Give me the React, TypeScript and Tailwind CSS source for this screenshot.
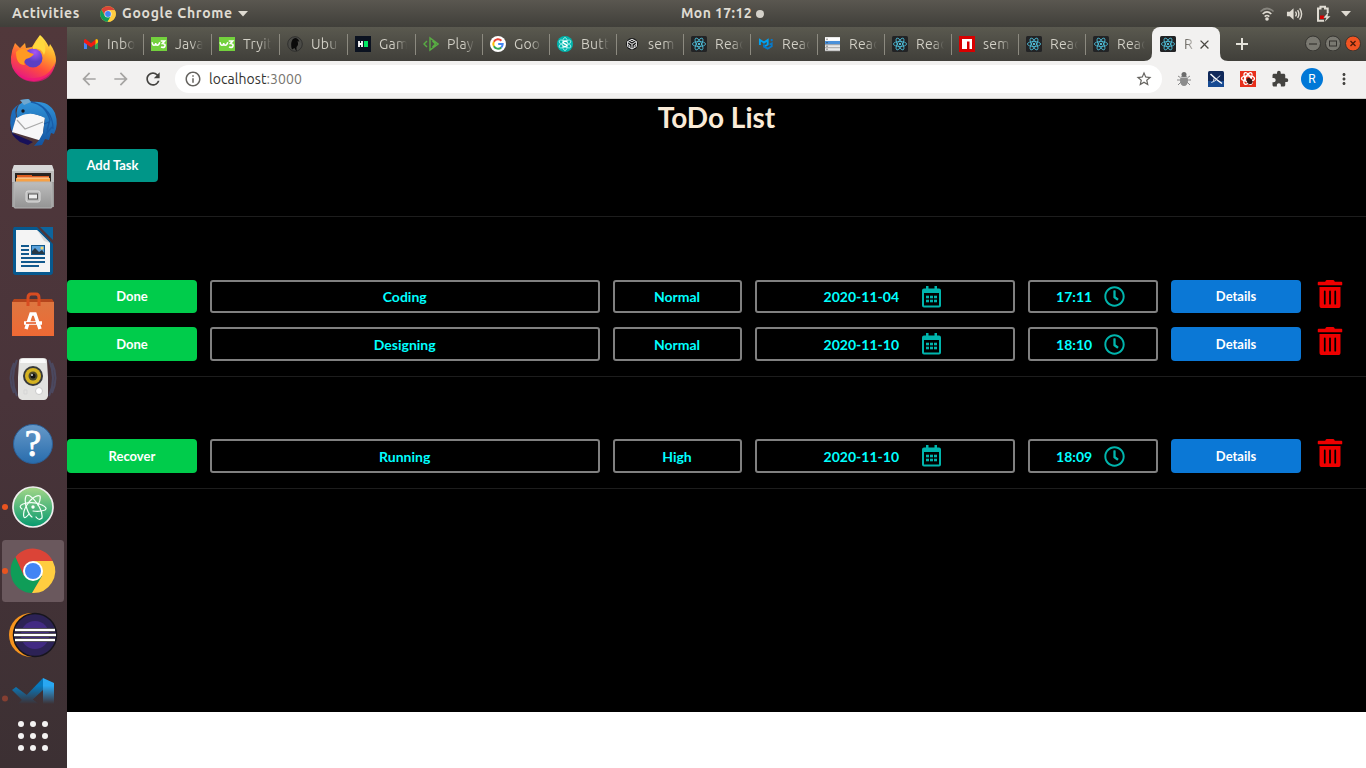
import type { ReactNode } from "react";
import { FaRegClock, FaTrashAlt } from "react-icons/fa";
import { MdArrowBack, MdArrowForward, MdRefresh, MdInfoOutline, MdStarBorder, MdExtension, MdMoreVert, MdClose } from "react-icons/md";

const uiFont = "font-['Ubuntu','Noto_Sans',sans-serif]";

function ChromeLogo({ className }: { className: string }) {
  return (
    <svg viewBox="0 0 48 48" className={className}>
      <circle cx="24" cy="24" r="23.5" fill="#fdd141" />
      <path d="M24 13 L44.6 13 A23.5 23.5 0 0 0 4.2 11.3 L14.5 29.5 Z" fill="#db4437" />
      <path d="M4.2 11.3 A23.5 23.5 0 0 0 23 47.5 L33.5 29.5 L24 24 L14.5 29.5 Z" fill="#0f9d58" />
      <path d="M33.5 29.5 L23 47.5 A23.5 23.5 0 0 0 44.6 13 L24 13 Z" fill="#ffcd40" />
      <circle cx="24" cy="24" r="10.7" fill="#f1f1f1" />
      <circle cx="24" cy="24" r="8.7" fill="#4285f4" />
    </svg>
  );
}

function ReactFavicon() {
  return (
    <svg viewBox="0 0 16 16" className="size-4">
      <rect width="16" height="16" rx="1.5" fill="#222325" />
      <g fill="none" stroke="#4fc3e0" strokeWidth="0.8">
        <ellipse cx="8" cy="8" rx="6.6" ry="2.5" />
        <ellipse cx="8" cy="8" rx="6.6" ry="2.5" transform="rotate(60 8 8)" />
        <ellipse cx="8" cy="8" rx="6.6" ry="2.5" transform="rotate(120 8 8)" />
      </g>
      <circle cx="8" cy="8" r="1.1" fill="#61dafb" />
    </svg>
  );
}

function W3Favicon() {
  return (
    <svg viewBox="0 0 16 16" className="size-4">
      <rect y="1" width="16" height="14" fill="#73d13d" />
      <path d="M1.2 6.3 Q1.4 9.3 3 9.3 Q4.700 9.300 4.700 7 Q4.900 9.300 6.300 9.300 Q8 9.200 8.800 6.300" fill="none" stroke="#fff" strokeWidth="1.500" />
      <path d="M9.700 5 H13.600 L11.500 7.500 Q14.300 7.600 14 9.700 Q13.400 12.300 10 11" fill="none" stroke="#fff" strokeWidth="1.700" />
    </svg>
  );
}

const gmail = (
  <svg viewBox="0 0 16 16" className="size-4">
    <path d="M1 4 v9 h3 V6z" fill="#4285f4" />
    <path d="M12 6 v7 h3 V4z" fill="#34a853" />
    <path d="M12 4 l1.500-1 q1.500 0 1.500 1.500 V6.500 l-3 2.300z" fill="#fbbc04" />
    <path d="M1 6.500 V4.500 Q1 3 2.500 3 l5.500 4.200 L12.500 3.500 V8 L8 11.300z" fill="#f21b12" />
  </svg>
);
const ubuntuWiki = (
  <svg viewBox="0 0 16 16" className="size-4">
    <circle cx="8" cy="8" r="7.300" fill="#4b4b47" stroke="#30302e" />
    <path d="M5 13.500 Q3 8 5.500 3.500 Q8 .5 11 3.300 L12.500 5.500 L10.500 5.300 Q12 9 9.500 11 L9.500 15.500 L7.500 12z" fill="#0a0a0a" />
  </svg>
);
const hackerRank = (
  <svg viewBox="0 0 16 16" className="size-4">
    <rect width="16" height="16" fill="#0b1220" />
    <path d="M4 5v6M7 5v6M4 8h3" stroke="#fff" strokeWidth="1.800" />
    <rect x="9" y="5" width="4" height="6" fill="#00ea64" />
  </svg>
);
const play = (
  <svg viewBox="0 0 16 16" className="size-4">
    <path d="M4 5 L1 8 L4 11 M7 2 V14 L15 8z M9.500 5 L12.500 8 L9.500 11" fill="none" stroke="#58ad43" strokeWidth="1.400" />
  </svg>
);
const google = (
  <svg viewBox="0 0 16 16" className="size-4">
    <circle cx="8" cy="8" r="8" fill="#fff" />
    <g fill="none" strokeWidth="2">
      <path d="M3.900 5.700 A4.700 4.700 0 0 1 11.400 4.700" stroke="#ea4335" />
      <path d="M3.900 5.700 A4.700 4.700 0 0 0 3.900 10.300" stroke="#fbbc05" />
      <path d="M3.900 10.300 A4.700 4.700 0 0 0 11.200 11.400" stroke="#34a853" />
      <path d="M11.200 11.400 A4.700 4.700 0 0 0 12.700 8 H8.200" stroke="#4285f4" />
    </g>
  </svg>
);
const semanticReact = (
  <svg viewBox="0 0 16 16" className="size-4">
    <circle cx="8" cy="8" r="8" fill="#00b5ad" />
    <g fill="none" stroke="#b4f3ef" strokeWidth="0.800">
      <ellipse cx="8" cy="8" rx="2.600" ry="6.500" />
      <ellipse cx="8" cy="8" rx="2.600" ry="6.500" transform="rotate(60 8 8)" />
      <ellipse cx="8" cy="8" rx="2.600" ry="6.500" transform="rotate(120 8 8)" />
      <path d="M10 5.800 Q8 4.700 6.500 5.800 Q6 7.500 8 8 Q10 8.500 9.500 10 Q8 11.200 6 10" stroke="#fff" strokeWidth="1.300" />
    </g>
  </svg>
);
const sandbox = (
  <svg viewBox="0 0 16 16" className="size-4">
    <circle cx="8" cy="8" r="6" fill="#171819" />
    <path d="M8 3.200 L12.400 5.600 V10.500 L8 13 L3.600 10.500 V5.600z M3.600 5.600 L8 8.200 L12.400 5.600 M8 8.200 V13 M5.800 4.400 L8 5.700 L10.200 4.400 M3.600 8.300 L5.800 9.600 V11.700 M12.400 8.300 L10.200 9.600 V11.700" fill="none" stroke="#e6e6e6" strokeWidth="1" />
  </svg>
);
const mui = (
  <svg viewBox="0 0 16 16" className="size-4">
    <path d="M1.900 9 V4 L6 6.500 L9.700 4 V8.500 L6 10.700" fill="none" stroke="#00a2f2" strokeWidth="1.900" />
    <path d="M6 8.500 V10.700 L9.700 12.700 L13.700 10.300 V7.500 L11.500 8.500 M13.700 3 V5.300" fill="none" stroke="#0779c9" strokeWidth="1.900" />
  </svg>
);
const list = (
  <svg viewBox="0 0 16 16" className="size-4">
    <rect y="1" width="15" height="14" fill="#e8e8e8" />
    <rect x="0" y="2" width="15" height="2.700" fill="#fff" />
    <rect x="0" y="5" width="15" height="3.300" fill="#4a90d9" />
    <path d="M0 8.700h15M0 11.700h15M0 15h15" stroke="#888" strokeWidth="0.700" />
    <path d="M2 2.700v1M2 6.200v1M2 9.700v1M2 12.700v1" stroke="#222" />
  </svg>
);
const npm = (
  <svg viewBox="0 0 16 16" className="size-4">
    <rect width="16" height="16" fill="#d80000" />
    <path d="M3 3 H13 V13 H10.500 V5.500 H8 V13 H3z" fill="#fff" />
  </svg>
);

const tabs: { icon: ReactNode; title: string }[] = [
  { icon: gmail, title: "Inbo" },
  { icon: <W3Favicon />, title: "Java" },
  { icon: <W3Favicon />, title: "Tryit" },
  { icon: ubuntuWiki, title: "Ubu" },
  { icon: hackerRank, title: "Gam" },
  { icon: play, title: "Play" },
  { icon: google, title: "Goo" },
  { icon: semanticReact, title: "Butt" },
  { icon: sandbox, title: "sem" },
  { icon: <ReactFavicon />, title: "Reac" },
  { icon: mui, title: "Reac" },
  { icon: list, title: "Reac" },
  { icon: <ReactFavicon />, title: "Reac" },
  { icon: npm, title: "sem" },
  { icon: <ReactFavicon />, title: "Reac" },
  { icon: <ReactFavicon />, title: "Reac" },
];

function TopBar() {
  return (
    <header className="grid h-[27px] shrink-0 grid-cols-[1fr_auto_1fr] items-center bg-linear-to-b from-[#5a5750] to-[#403f3a] text-[14px] font-semibold text-[#dfdbd2]">
      <div className="flex items-center pl-3">
        <span className="w-[68px] tracking-[0.55px] whitespace-nowrap">Activities</span>
        <ChromeLogo className="ml-5 size-4" />
        <span className="ml-[6px] w-[111px] tracking-[0.7px] whitespace-nowrap">Google Chrome</span>
        <svg viewBox="0 0 10 6" className="ml-[5px] h-[6px] w-[10px]"><path d="M0 0h10L5 5.500z" fill="#dfdbd2" /></svg>
      </div>
      <div className="flex items-center gap-1 pl-[79px]">
        <span className="w-[71px] tracking-[0.4px] whitespace-nowrap">Mon 17:12</span>
        <span className="size-2 rounded-full bg-[#d4d1c9]" />
      </div>
      <div className="flex items-center justify-end pr-[15px]">
        <svg viewBox="0 0 16 16" className="mr-[11px] size-4" fill="none">
          <path d="M1.500 5.500 Q8 -.5 14.500 5.500" stroke="#86847d" strokeWidth="1.700" />
          <path d="M3.700 8 Q8 3.800 12.300 8M5.700 10.700 Q8 8.300 10.300 10.700" stroke="#dfdbd2" strokeWidth="1.700" />
          <circle cx="8" cy="13" r="1.800" fill="#dfdbd2" />
        </svg>
        <svg viewBox="0 0 18 16" className="mr-[13px] h-4 w-[17px]" fill="none" stroke="#dfdbd2" strokeWidth="1.500">
          <path d="M1 5.500 H4 L8 2 V14 L4 10.500 H1z" fill="#dfdbd2" stroke="none" />
          <path d="M10 5.500 Q12 8 10 10.500M12.300 3.800 Q15 8 12.300 12.200M14.500 2 Q18.500 8 14.500 14" />
        </svg>
        <svg viewBox="0 0 15 18" className="mr-[10px] h-[18px] w-[15px]">
          <path d="M8 15.700 H2 V3.500 H4.500 V1.800 H9 V3.500 H11.700 V8" fill="none" stroke="#dfdbd2" strokeWidth="2" />
          <rect x="4" y="10.500" width="4" height="3.500" fill="#d40000" />
          <path d="M12.500 7 L7.500 12.700 H10.500 L8.500 17 L14.500 11.200 H11.500z" fill="#dfdbd2" />
        </svg>
        <svg viewBox="0 0 10 6" className="h-[6px] w-[10px]"><path d="M0 0h10L5 5.500z" fill="#dfdbd2" /></svg>
      </div>
    </header>
  );
}

function TabStrip() {
  return (
    <div className="flex h-[34px] shrink-0 bg-linear-to-b from-[#5a594f] to-[#403f3a] pl-[8px]">
      {tabs.map((t, i) => (
        <div key={i} className={`flex shrink-0 items-center ${i < 5 ? "w-[68px]" : "w-[67px]"}`}>
          <span className={i === 0 ? "h-[21px] w-px" : "h-[21px] w-px bg-[#8c8a80]"} />
          <span className="ml-[7px] shrink-0">{t.icon}</span>
          <span className="ml-2 w-[28px] overflow-hidden bg-linear-to-r from-[#d3d1c7] from-60% to-transparent bg-clip-text text-[14px] tracking-[0.2px] whitespace-nowrap text-transparent">{t.title}</span>
        </div>
      ))}
      <div className="relative flex w-[68px] shrink-0 items-center rounded-t-lg bg-[#f2f1f0] pl-2">
        <svg viewBox="0 0 8 8" className="absolute bottom-0 -left-2 size-2"><path d="M8 0V8H0Q8 8 8 0" fill="#f2f1f0" /></svg>
        <svg viewBox="0 0 8 8" className="absolute -right-2 bottom-0 size-2"><path d="M0 0V8H8Q0 8 0 0" fill="#f2f1f0" /></svg>
        <ReactFavicon />
        <span className="ml-2 w-[9px] overflow-hidden bg-linear-to-r from-[#55524c] to-[#bbb9b5] bg-clip-text text-[14px] text-transparent">R</span>
        <MdClose className="ml-[4px] size-[15px] text-[#4a4843]" />
      </div>
      <svg viewBox="0 0 12 12" className="mt-[11px] ml-4 size-3"><path d="M6 0v12M0 6h12" stroke="#e4e2da" strokeWidth="2" /></svg>
      <div className="mt-[8px] ml-auto flex gap-1 pr-[5px]">
        {[0, 1, 2].map((n) => (
          <svg key={n} viewBox="0 0 16 16" className="size-4">
            <circle cx="8" cy="8.500" r="7.500" fill={n === 2 ? "#f15422" : "#7a7971"} stroke="#34332f" />
            {n === 0 && <path d="M4 9h8" stroke="#34332f" strokeWidth="1.200" />}
            {n === 1 && <rect x="4.500" y="6" width="7" height="5" fill="none" stroke="#34332f" />}
            {n === 2 && <path d="M5.500 6l5 5M10.500 6l-5 5" stroke="#4b1b0b" strokeWidth="1.300" />}
          </svg>
        ))}
      </div>
    </div>
  );
}

function Toolbar() {
  return (
    <div className="flex h-[38px] shrink-0 items-center border-b border-[#cfcdca] bg-[#f2f1f0] pb-px pl-3">
      <MdArrowBack className="size-5 text-[#a5a4a2]" />
      <MdArrowForward className="ml-3 size-5 text-[#a5a4a2]" />
      <MdRefresh className="ml-3 size-5 text-[#444340]" />
      <div className="ml-3 flex h-7 w-[987px] items-center rounded-full bg-white px-[9px]">
        <MdInfoOutline className="size-[18px] text-[#65635f]" />
        <span className="ml-[7px] flex-1 text-[14px] tracking-[0.07px] text-[#33322f]">localhost<span className="text-[#777570]">:3000</span></span>
        <MdStarBorder className="size-[18px] text-[#65635f]" />
      </div>
      <svg viewBox="0 0 16 16" className="ml-[14px] size-4">
        <g stroke="#888" strokeWidth="1"><path d="M2 5l3 2M1 9h4M2 14l3-3M14 5l-3 2M15 9h-4M14 14l-3-3" /></g>
        <ellipse cx="8" cy="9.500" rx="4" ry="5.500" fill="#8c8c8c" /><circle cx="8" cy="3.500" r="2.500" fill="#6c6c6c" />
        <path d="M4 6.500h8" stroke="#d5d5d5" strokeWidth=".7" />
      </svg>
      <svg viewBox="0 0 16 16" className="ml-4 size-4">
        <rect width="16" height="16" rx="1.500" fill="#10295a" /><path d="M0 10h16v6H0z" fill="#174a92" />
        <path d="M2.500 3 L8.500 8.500 L14 12.500" fill="none" stroke="#fff" strokeWidth="1.500" />
        <path d="M12.300 4.500 L8 8.300 M6 7.500 L5.500 10.500 L3.300 11.500 M8 9 L5.500 10.700" fill="none" stroke="#dbe4f2" strokeWidth="1" />
      </svg>
      <svg viewBox="0 0 16 16" className="ml-4 size-4">
        <rect width="16" height="16" fill="#e8301c" />
        <g fill="none" stroke="#fff" strokeWidth="1.300"><ellipse cx="8" cy="7.500" rx="6.500" ry="2.700" /><ellipse cx="8" cy="7.500" rx="6.500" ry="2.700" transform="rotate(60 8 7.500)" /><ellipse cx="8" cy="7.500" rx="6.500" ry="2.700" transform="rotate(120 8 7.500)" /></g>
        <ellipse cx="9.500" cy="10" rx="2.500" ry="3.300" fill="#3a1512" transform="rotate(-35 9.500 10)" />
        <path d="M6 9l7 2M7 12l5-4M8 13l4-1" stroke="#3a1512" strokeWidth=".8" />
      </svg>
      <MdExtension className="ml-[15px] size-[18px] text-[#444340]" />
      <span className="ml-[12px] flex size-[22px] items-center justify-center rounded-full bg-[#0078d7] font-['Roboto',sans-serif] text-[12px] text-white">R</span>
      <MdMoreVert className="ml-[12px] size-[18px] text-[#444340]" />
    </div>
  );
}

function CalendarIcon() {
  return (
    <svg viewBox="0 0 19 22" className="ml-[23px] h-[22px] w-[19px]">
      <path d="M4 0h2.500V3H4zM12.500 0H15V3h-2.500z" fill="#00b5ad" />
      <path d="M2 2.500H17Q19 2.500 19 4.500V19.500Q19 21.500 17 21.500H2Q0 21.500 0 19.500V4.500Q0 2.500 2 2.500ZM2 7V19.500H17V7Z" fill="#00b5ad" fillRule="evenodd" />
      {[9.7, 13.7].map((y) => [4, 8, 12].map((x) => <rect key={`${x}-${y}`} x={x} y={y} width="3" height="2.600" fill="#00b5ad" />))}
    </svg>
  );
}

const rowBtn = "flex items-center justify-center rounded-[4px] text-[13px] font-bold text-white";
const cell = "flex items-center justify-center rounded-[3px] border-2 border-[#808080] text-[14px] font-bold text-[#00ffff]";

type Task = { action: string; name: string; priority: string; date: string; time: string };

function TaskRow({ task, className }: { task: Task; className: string }) {
  return (
    <div className={`grid grid-cols-[10%_30%_10%_20%_10%_10%_5%] gap-x-[1%] ${className}`}>
      <button className={`${rowBtn} bg-[#00cc4b] pt-px`}>{task.action}</button>
      <div className={cell}>{task.name}</div>
      <div className={`${cell} pr-px`}>{task.priority}</div>
      <div className={`${cell} pr-[6px]`}>
        <span className="w-[76px] text-center whitespace-nowrap">{task.date}</span>
        <CalendarIcon />
      </div>
      <div className={`${cell} pr-[6px]`}>
        <span className="w-[37px] text-center whitespace-nowrap">{task.time}</span>
        <FaRegClock className="ml-[11px] size-[21px] text-[#00b5ad]" />
      </div>
      <button className={`${rowBtn} bg-[#0b78d6] pt-px`}>Details</button>
      <FaTrashAlt className="ml-[2.5px] size-7 text-[#ee0000]" />
    </div>
  );
}

function TodoPage() {
  return (
    <main className="flex h-[613px] shrink-0 flex-col bg-black font-['Lato',sans-serif]">
      <h1 className="h-[50px] text-center text-[28px] leading-[36px] font-bold text-[#faebd7]">ToDo List</h1>
      <button className="flex h-[33px] w-[91px] items-center justify-center rounded-[4px] bg-[#009688] text-[13px] font-bold text-white">Add Task</button>
      <hr className="mt-[34px] border-[#1d1d1d]" />
      <section className="mt-[63px]">
        <TaskRow className="h-[33px]" task={{ action: "Done", name: "Coding", priority: "Normal", date: "2020-11-04", time: "17:11" }} />
        <TaskRow className="mt-[14px] h-[34px]" task={{ action: "Done", name: "Designing", priority: "Normal", date: "2020-11-10", time: "18:10" }} />
      </section>
      <hr className="mt-[15px] border-[#1d1d1d]" />
      <section className="mt-[62px]">
        <TaskRow className="h-[34px]" task={{ action: "Recover", name: "Running", priority: "High", date: "2020-11-10", time: "18:09" }} />
      </section>
      <hr className="mt-[15px] border-[#1d1d1d]" />
    </main>
  );
}

const dockIcons: ReactNode[] = [
  <>
    <defs>
      <linearGradient id="fx" x1="0.800" y1="0" x2="0.300" y2="1"><stop offset="0" stopColor="#fff44f" /><stop offset=".35" stopColor="#ffa62a" /><stop offset=".65" stopColor="#ff4f3c" /><stop offset="1" stopColor="#e31587" /></linearGradient>
      <radialGradient id="fxg" cx=".6" cy=".2"><stop offset="0" stopColor="#a855f7" /><stop offset="1" stopColor="#5b3fc4" /></radialGradient>
    </defs>
    <path d="M15 16 Q12 22 11 30 Q10 42 19 49 Q28 56 40 53 Q54 48 56 34 Q56 25 50 17 L49 20 Q45 12 40 8 Q36 13 32 20 L26 21 L25 16 L20 21z" fill="url(#fx)" />
    <circle cx="33" cy="31" r="9.500" fill="url(#fxg)" />
    <path d="M16 25 Q22 19 27 24 Q31 27 34 27 Q31 31 26 32 Q23 35 25 38 Q16 38 16 25z" fill="#ff9a22" />
    <path d="M33 22 Q41 20 44 28 Q48 20 41 11 Q36 13 33 20z" fill="#ffd83d" />
    <path d="M13 40 Q21 53 35 51 Q49 50 55 36 Q53 54 34 55 Q18 54 13 40z" fill="#ef147a" opacity=".7" />
  </>,
  <>
    <defs><linearGradient id="tb" x2="0" y2="1"><stop stopColor="#3397dc" /><stop offset="1" stopColor="#12529f" /></linearGradient></defs>
    <path d="M12 20 Q15 15 20 13 Q14 16 16 25 L13 43 Q8 33 12 20z" fill="#1f6dbb" />
    <path d="M10 35 Q10 44 20 51 L28 54 L33 51 L12 42z" fill="#17105a" />
    <path d="M16 27 L24 20 L45 26 L42 50 L12 41z" fill="#f7f7f8" />
    <path d="M17 29 L25 38 L43 31" fill="none" stroke="#aaa" strokeWidth="1.200" />
    <path d="M17 27 Q15 15 23 11 L21 9 L29 8 L31 11 Q49 9 55 22 Q59 34 54 43 L51 42 L49 49 L45 48 L42 54 L34 55 Q40 49 43 42 L45 27 Q34 22 28 23 Q23 23 17 27z" fill="url(#tb)" />
    <path d="M31 11 Q45 13 50 29 L47 39 M40 14 Q53 22 53 38 M44 33 L49 31 L47 42 L52 36" fill="none" stroke="#185ca8" strokeWidth="1.300" />
    <circle cx="23" cy="20" r="1.700" fill="#161a23" /><path d="M20 9l8-1 3 3-7 3z" fill="#6fa7cf" />
  </>,
  <>
    <defs><linearGradient id="cab" x2="0" y2="1"><stop stopColor="#bdbdbd" /><stop offset="1" stopColor="#949494" /></linearGradient></defs>
    <path d="M14 10 H52 L54 15 V52 H12 V15z" fill="#999" />
    <path d="M14 10 H52 L54 16 H12z" fill="#d8d8d8" />
    <path d="M12 16 H54 V27 H12z" fill="#bdbdbd" />
    <rect x="15" y="18" width="36" height="9" fill="#292421" />
    <path d="M17 20h15v1h17v6H17z" fill="#dd5d20" /><path d="M16 23h34v4H16z" fill="#f7a044" /><path d="M17 23h32" stroke="#ffe1b4" />
    <rect x="14" y="27" width="38" height="26" rx="1" fill="url(#cab)" stroke="#b5b5b5" />
    <rect x="26" y="36" width="14" height="11" rx="2" fill="#b9b9b9" stroke="#ddd" /><rect x="28.500" y="39" width="9" height="5" fill="#eee" stroke="#555" />
  </>,
  <>
    <path d="M14 8 H37 L53 25 V53 Q53 56 50 56 H16 Q13 56 13 53 V10z" fill="#07598f" />
    <path d="M40 8h13v13z" fill="#0d659d" />
    <path d="M16 11 H37 L50 24 V53 H16z" fill="#f4f4f4" /><path d="M37 11L50 24L44 22z" fill="#d9d9d9" />
    <path d="M21 27h8M21 31h8M21 35h8M21 39h24M21 43h24M21 47h18" stroke="#12598d" strokeWidth="2" />
    <rect x="31.500" y="26.500" width="13" height="9" fill="#5aa2dc" stroke="#12598d" /><path d="M32 35V32l3-3 4 4 3-2 3 4z" fill="#273946" /><circle cx="42" cy="29" r="1.500" fill="#f5d56a" />
  </>,
  <>
    <defs><linearGradient id="bag" x2="0" y2="1"><stop stopColor="#dd7640" /><stop offset="1" stopColor="#ef6934" /></linearGradient></defs>
    <path d="M14 16H52L54 19H12z" fill="#b5451c" /><rect x="12" y="19" width="42" height="34" fill="url(#bag)" />
    <path d="M28 23V15Q28 11 31 11H36Q39 11 39 15V23" fill="none" stroke="#d84c21" strokeWidth="3" />
    <path d="M26 46 L31 31H35L40 46M24 40H42" fill="none" stroke="#fff" strokeWidth="3.500" />
    <path d="M26 40H36" stroke="#e55a28" strokeWidth="1.600" />
  </>,
  <>
    <g fill="none" stroke="#4d618f" opacity=".45"><path d="M17 13Q9 31 17 49M14 16Q7 31 14 46M49 13Q57 31 49 49M52 16Q59 31 52 46" strokeWidth="2" /></g>
    <path d="M19 14Q19 11 23 11H43Q47 11 47 14L48 30V49Q47 53 44 53H22Q18 52 18 48V30z" fill="#e2e2e0" />
    <path d="M21 12H45L46 16H20z" fill="#fafafa" />
    <circle cx="33" cy="29" r="10" fill="#383a3a" /><circle cx="33" cy="29" r="8" fill="#d4b221" /><circle cx="33" cy="29" r="4.500" fill="#4f4b2b" /><circle cx="33" cy="29" r="2.500" fill="#111" /><circle cx="32" cy="28" r="1" fill="#ddd" />
    <circle cx="39" cy="44" r="3.500" fill="#fff" stroke="#c9c9c9" /><path d="M24 43h3v4h-3z" fill="none" stroke="#d5d5d5" />
  </>,
  <>
    <defs><linearGradient id="help" x2="0" y2="1"><stop stopColor="#6699c9" /><stop offset="1" stopColor="#286cac" /></linearGradient></defs>
    <circle cx="33" cy="33" r="19.500" fill="url(#help)" stroke="#2b5f97" />
    <text x="33" y="44.500" textAnchor="middle" fill="#fff" fontFamily="Liberation Serif, serif" fontSize="37" stroke="#fff" strokeWidth="0.900">?</text>
  </>,
  <>
    <defs><linearGradient id="atom" x2="0" y2="1"><stop stopColor="#a4d788" /><stop offset="1" stopColor="#05996f" /></linearGradient></defs>
    <circle cx="33" cy="32" r="20" fill="url(#atom)" stroke="#eee" strokeWidth="1.700" />
    <g fill="none" stroke="#f5fff8" strokeWidth="1.200" strokeLinecap="round">
      <path d="M22 34 Q18 31 23 29 Q33 26 42 30 Q48 33 45 35 Q40 37 33 36" />
      <path d="M29 39 Q25 44 24 42 Q22 36 29 27 Q36 19 40 21 Q41 25 38 30" />
      <path d="M36 42 Q39 46 42 43 Q43 36 36 27 Q29 18 26 21 Q24 26 27 34 Q29 40 32 42" />
    </g>
    <circle cx="33" cy="32" r="1.700" fill="#fff" />
  </>,
  <>
    <path d="M15.500 18 A22 22 0 0 0 32 54 L42 37 L33 32 L24 37z" fill="#0f9d58" />
    <path d="M33 22H52.700A22 22 0 0 1 32 54L42 37z" fill="#ffcd40" />
    <path d="M15.500 18L24 37L25 26L33 22H52.700A22 22 0 0 0 15.500 18z" fill="#db4437" />
    <circle cx="33" cy="32" r="10" fill="#fff" /><circle cx="33" cy="32" r="8" fill="#4285f4" />
  </>,
  <>
    <circle cx="31" cy="32" r="22" fill="#f7941e" /><circle cx="35" cy="32" r="21.500" fill="#2c2255" stroke="#17151d" strokeWidth="1.500" /><circle cx="35" cy="32" r="14" fill="#412a83" />
    <path d="M15 27h40M14 32h42M15 37h40" stroke="#17151d" strokeWidth="4" />
    <path d="M15 27h40M14 32h42M15 37h40" stroke="#fff" strokeWidth="2.300" />
  </>,
];

const runningDots = [7, 8];

function Dock() {
  return (
    <nav className="flex w-[67px] shrink-0 flex-col bg-linear-to-b from-[#51383b] via-[#49343a] to-[#3c3033]">
      {dockIcons.map((icon, i) => (
        <svg key={i} viewBox="0 0 67 64" className="h-16 w-[67px] shrink-0">
          {i === 8 && <rect x="2" y="1" width="62" height="62" rx="3.500" fill="#6a585d" />}
          {runningDots.includes(i) && <circle cx="5" cy="32" r="3" fill="#e95420" />}
          {icon}
        </svg>
      ))}
      <svg viewBox="0 0 67 40" className="h-10 w-[67px] shrink-0">
        <defs><linearGradient id="fade" gradientUnits="userSpaceOnUse" x1="0" y1="11" x2="0" y2="37"><stop offset=".3" stopColor="#fff" /><stop offset="1" stopColor="#000" /></linearGradient><mask id="codeMask"><rect width="67" height="37" fill="url(#fade)" /></mask></defs>
        <g mask="url(#codeMask)"><path d="M12 23L16 20L39 37H26z" fill="#087bbd" /><path d="M43 11V23L28 37H18z" fill="#0779bd" /><path d="M43 11L54 16V37H43z" fill="#29a8f2" /></g>
        <circle cx="5" cy="31.500" r="3" fill="#853f32" />
      </svg>
      <svg viewBox="0 0 67 61" className="h-[61px] w-[67px] shrink-0" fill="#f4f2f2">
        {[17, 29, 41].map((y) => [21, 33, 45].map((x) => <circle key={`${x}-${y}`} cx={x} cy={y} r="3" />))}
      </svg>
    </nav>
  );
}

export default function App() {
  return (
    <div className={`flex h-[768px] w-[1366px] flex-col overflow-hidden bg-white ${uiFont}`}>
      <TopBar />
      <div className="flex min-h-0 flex-1">
        <Dock />
        <div className="flex w-[1299px] flex-col">
          <TabStrip />
          <Toolbar />
          <TodoPage />
        </div>
      </div>
    </div>
  );
}
